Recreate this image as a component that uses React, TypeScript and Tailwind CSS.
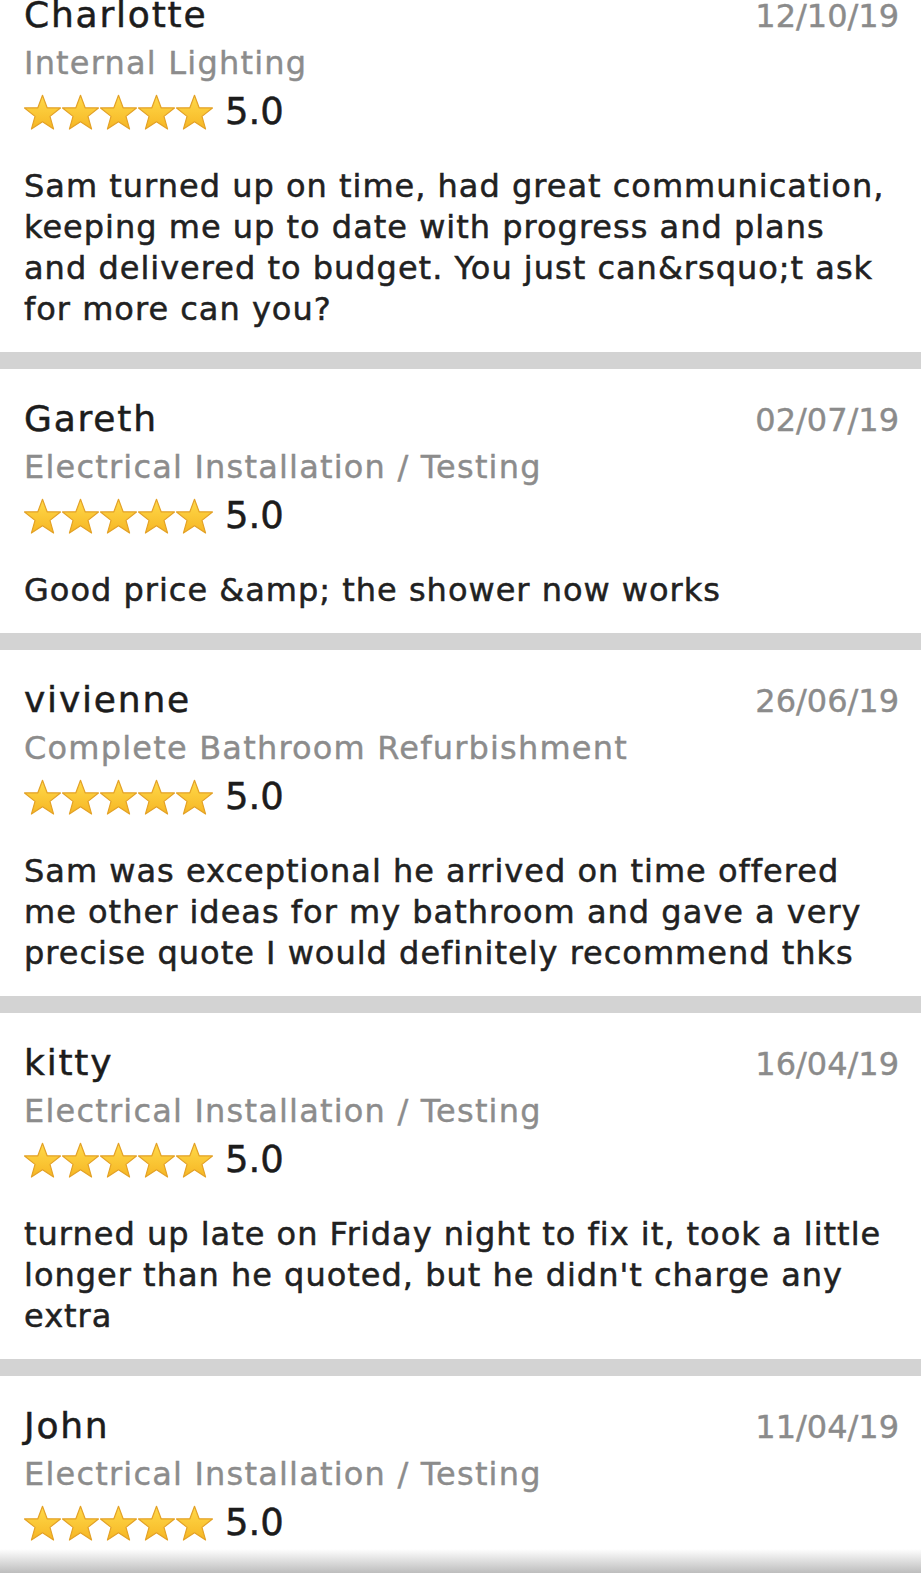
import React from "react";

type Review = {
  name: string;
  date: string;
  category: string;
  body: string;
};

const reviews: Review[] = [
  {
    name: "Charlotte",
    date: "12/10/19",
    category: "Internal Lighting",
    body:
      "Sam turned up on time, had great communication, keeping me up to date with progress and plans and delivered to budget. You just can&rsquo;t ask for more can you?",
  },
  {
    name: "Gareth",
    date: "02/07/19",
    category: "Electrical Installation / Testing",
    body: "Good price &amp; the shower now works",
  },
  {
    name: "vivienne",
    date: "26/06/19",
    category: "Complete Bathroom Refurbishment",
    body:
      "Sam was exceptional he arrived on time offered me other ideas for my bathroom and gave a very precise quote I would definitely recommend thks",
  },
  {
    name: "kitty",
    date: "16/04/19",
    category: "Electrical Installation / Testing",
    body:
      "turned up late on Friday night to fix it, took a little longer than he quoted, but he didn't charge any extra",
  },
  {
    name: "John",
    date: "11/04/19",
    category: "Electrical Installation / Testing",
    body: "",
  },
];

function Star() {
  return (
    <svg
      width="37"
      height="36"
      viewBox="3 0 94 91"
      className="block shrink-0"
      aria-hidden="true"
    >
      <defs>
        <linearGradient id="starFill" x1="0" y1="0" x2="0" y2="1">
          <stop offset="0" stopColor="#FFDA4A" />
          <stop offset="1" stopColor="#F6B624" />
        </linearGradient>
      </defs>
      <polygon
        points="50,3 61.8,34.8 95.6,35.2 69,56.6 78.2,88.8 50,70 21.8,88.8 31,56.6 4.4,35.2 38.2,34.8"
        fill="url(#starFill)"
        stroke="#E3A126"
        strokeWidth="3"
        strokeLinejoin="round"
      />
    </svg>
  );
}

function Card({ r }: { r: Review }) {
  return (
    <div className="pl-[24px] pr-[22px] pt-[28px] pb-[22px]">
      <div className="flex items-baseline justify-between">
        <div className="text-[36px] leading-[44px] tracking-[1.8px] text-[#1c1c1c] [-webkit-text-stroke:0.5px]">
          {r.name}
        </div>
        <div className="text-[32px] leading-[44px] text-[#8b8b8b] [-webkit-text-stroke:0.4px]">
          {r.date}
        </div>
      </div>
      <div className="text-[32px] leading-[50px] tracking-[1.2px] text-[#8c8c8c] whitespace-nowrap [-webkit-text-stroke:0.4px]">
        {r.category}
      </div>
      <div className="flex items-center h-[47px]">
        <div className="flex gap-[1px]">
          <Star />
          <Star />
          <Star />
          <Star />
          <Star />
        </div>
        <span className="ml-[12px] text-[37px] leading-[47px] text-[#1c1c1c] [-webkit-text-stroke:0.5px]">
          5.0
        </span>
      </div>
      {r.body && (
        <p className="mt-[31px] mr-[8px] text-[32px] leading-[41px] tracking-[1px] text-[#212121] [-webkit-text-stroke:0.5px]">
          {r.body}
        </p>
      )}
    </div>
  );
}

export default function App() {
  return (
    <div
      className="relative h-[1573px] w-full overflow-hidden bg-white"
      style={{ fontFamily: '"DejaVu Sans", "Liberation Sans", sans-serif' }}
    >
      <div className="-mt-[35px]">
        {reviews.map((r, i) => (
          <React.Fragment key={r.name}>
            {i > 0 && <div className="h-[17px] bg-[#d3d3d3]" />}
            <Card r={r} />
          </React.Fragment>
        ))}
      </div>
      <div className="pointer-events-none absolute bottom-0 left-0 right-0 h-[24px] bg-linear-to-b from-white/0 to-[#bdbdbd]" />
    </div>
  );
}
